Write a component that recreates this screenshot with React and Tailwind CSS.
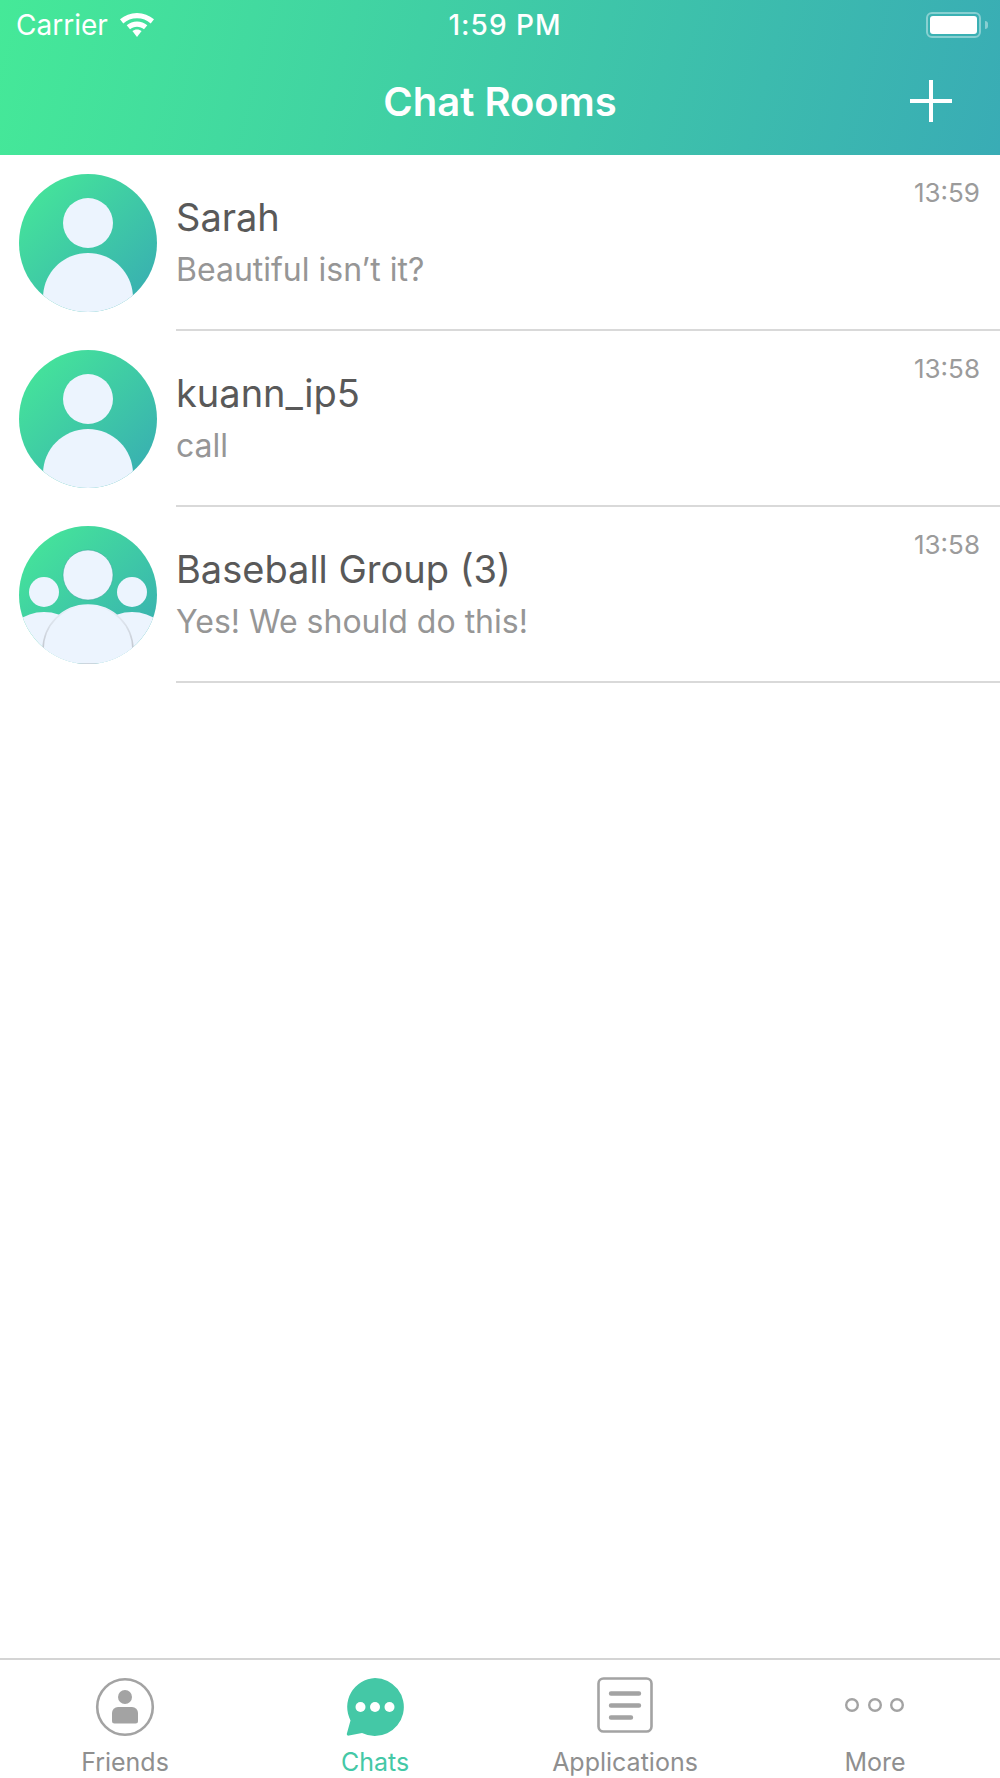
import React from 'react';

const rooms = [
  { name: 'Sarah', message: 'Beautiful isn’t it?', time: '13:59', group: false },
  { name: 'kuann_ip5', message: 'call', time: '13:58', group: false },
  { name: 'Baseball Group (3)', message: 'Yes! We should do this!', time: '13:58', group: true },
];

function Avatar({ id, group }) {
  return (
    <svg width="138" height="138" viewBox="0 0 138 138" className="shrink-0">
      <defs>
        <linearGradient id={id} x1="0" y1="0" x2="1" y2="1">
          <stop offset="0.1" stopColor="#45e49a" />
          <stop offset="1" stopColor="#37a9b4" />
        </linearGradient>
        <linearGradient id={`${id}-edge`} x1="0" y1="0" x2="0" y2="1">
          <stop offset="0" stopColor="#ecf4fe" />
          <stop offset="0.7" stopColor="#c5cad2" />
        </linearGradient>
        <clipPath id={`${id}-clip`}>
          <circle cx="69" cy="69" r="69" />
        </clipPath>
      </defs>
      <circle cx="69" cy="69" r="69" fill={`url(#${id})`} />
      <g clipPath={`url(#${id}-clip)`}>
        {group ? (
          <>
            <circle cx="25" cy="66" r="15" fill="#ecf4fe" />
            <circle cx="113" cy="66" r="15" fill="#ecf4fe" />
            <ellipse cx="25" cy="118" rx="38" ry="32" fill="#ecf4fe" />
            <ellipse cx="113" cy="118" rx="38" ry="32" fill="#ecf4fe" />
            <circle cx="69" cy="49" r="25" fill="#ecf4fe" stroke="#3aa59a" strokeOpacity="0.5" />
            <path d="M24 138V124C24 99 44 79 69 79S114 99 114 124V138Z" fill="#ecf4fe" stroke={`url(#${id}-edge)`} strokeWidth="1.5" />
          </>
        ) : (
          <>
            <circle cx="69" cy="49" r="25" fill="#ecf4fe" />
            <path d="M24 138V124C24 99 44 79 69 79S114 99 114 124V138Z" fill="#ecf4fe" />
          </>
        )}
      </g>
    </svg>
  );
}

function RoomRow({ room, index }) {
  return (
    <div className="flex h-[176px] pl-[19px]">
      <div className="pt-[19px]">
        <Avatar id={`avatar-${index}`} group={room.group} />
      </div>
      <div className="ml-[19px] flex-1 border-b-2 border-[#d9d9d9] relative pt-[39px]">
        <p className="text-[38px] leading-[46px] text-[#595959]">{room.name}</p>
        <p className="text-[32px] leading-[42px] mt-[9px] text-[#969696]">{room.message}</p>
        <span className="absolute right-[20px] top-[21px] text-[26px] leading-[34px] text-[#9b9b9b]">{room.time}</span>
      </div>
    </div>
  );
}

function FriendsIcon() {
  return (
    <svg width="70" height="70" viewBox="0 0 70 70" fill="#a3a3a3">
      <circle cx="35" cy="35" r="27.8" fill="none" stroke="#a3a3a3" strokeWidth="2.6" />
      <circle cx="35" cy="25" r="7" />
      <path d="M22 41a6 6 0 0 1 6-6h14a6 6 0 0 1 6 6v8a2.5 2.5 0 0 1-2.5 2.5h-21A2.5 2.5 0 0 1 22 49Z" />
    </svg>
  );
}

function ChatsIcon() {
  return (
    <svg width="70" height="70" viewBox="0 0 70 70">
      <path d="M35 6a29 29 0 1 1-13 55l-13 2.600c-1.500.3-2.500-.8-2.100-2.200l3.600-13A29 29 0 0 1 35 6Z" fill="#44c8a6" />
      <circle cx="20.500" cy="35" r="5" fill="#fff" />
      <circle cx="35" cy="35" r="5" fill="#fff" />
      <circle cx="49.500" cy="35" r="5" fill="#fff" />
    </svg>
  );
}

function ApplicationsIcon() {
  return (
    <svg width="70" height="70" viewBox="0 0 70 70" fill="none" stroke="#a3a3a3">
      <rect x="8.500" y="6.500" width="53" height="53" rx="5" strokeWidth="2.600" />
      <path d="M21 21.500h28M21 33.500h28M21 45.500h20" strokeWidth="4.400" strokeLinecap="round" />
    </svg>
  );
}

function MoreIcon() {
  return (
    <svg width="70" height="70" viewBox="0 0 70 70" fill="none" stroke="#a3a3a3" strokeWidth="2.400">
      <circle cx="12" cy="33" r="5.800" />
      <circle cx="35" cy="33" r="5.800" />
      <circle cx="57" cy="33" r="5.800" />
    </svg>
  );
}

const tabs = [
  { label: 'Friends', icon: <FriendsIcon /> },
  { label: 'Chats', icon: <ChatsIcon />, active: true },
  { label: 'Applications', icon: <ApplicationsIcon /> },
  { label: 'More', icon: <MoreIcon /> },
];

export default function App() {
  return (
    <div className="w-[1000px] h-[1778px] flex flex-col bg-white font-['Inter',sans-serif] overflow-hidden">
      {/* Status bar + nav */}
      <header className="h-[155px] shrink-0 bg-[linear-gradient(105deg,#45e998,#39acb5)] text-white">
        <div className="flex items-center justify-between h-[50px] pl-[16px] pr-[12px] relative">
          <div className="flex items-center gap-[12px]">
            <span className="text-[28px] leading-[30px]">Carrier</span>
            <svg width="34" height="24" viewBox="0 0 34 24" fill="#fff">
              <path d="M17 0C10.500 0 4.700 2.300 0 6.300l3.300 4.100C7 7.200 11.800 5.300 17 5.300s10 1.900 13.700 5.100L34 6.300C29.300 2.300 23.500 0 17 0Z" />
              <path d="M17 8.500c-3.900 0-7.500 1.400-10.300 3.800l3.300 4c1.900-1.600 4.300-2.500 7-2.500s5.100.9 7 2.500l3.300-4C24.500 9.900 20.900 8.500 17 8.500Z" />
              <path d="M17 16.500c-1.800 0-3.300.6-4.600 1.600L17 24l4.600-5.900c-1.300-1-2.800-1.600-4.600-1.600Z" />
            </svg>
          </div>
          <span className="absolute left-0 right-0 pl-[10px] text-center text-[28px] leading-[30px] tracking-[1px] font-medium">1:59 PM</span>
          <div className="flex items-center gap-[4px]">
            <div className="w-[55px] h-[26px] rounded-[6px] border-2 border-white/40 p-[2px]">
              <div className="w-full h-full rounded-[3px] bg-white"></div>
            </div>
            <div className="w-[3px] h-[8px] rounded-r-full bg-white/40"></div>
          </div>
        </div>
        <div className="flex items-center justify-center h-[105px] relative">
          <h1 className="text-[40px] leading-[46px] font-semibold mt-[-2px]">Chat Rooms</h1>
          <svg width="42" height="42" viewBox="0 0 42 42" className="absolute left-[910px] top-[30px]" fill="#fff">
            <rect x="0" y="19" width="42" height="4" />
            <rect x="19" y="0" width="4" height="42" />
          </svg>
        </div>
      </header>

      {/* Room list */}
      <main className="flex-1">
        {rooms.map((room, i) => (
          <RoomRow key={room.name} room={room} index={i} />
        ))}
      </main>

      {/* Tab bar */}
      <nav className="h-[120px] shrink-0 border-t-2 border-[#d4d4d4] grid grid-cols-4 pt-[12px]">
        {tabs.map(tab => (
          <div key={tab.label} className="flex flex-col items-center">
            <div className="w-[70px] h-[70px]">{tab.icon}</div>
            <span className={`text-[25px] leading-[28px] mt-[6px] ${tab.active ? 'text-[#44c8a6]' : 'text-[#8f8f8f]'}`}>{tab.label}</span>
          </div>
        ))}
      </nav>
    </div>
  );
}
